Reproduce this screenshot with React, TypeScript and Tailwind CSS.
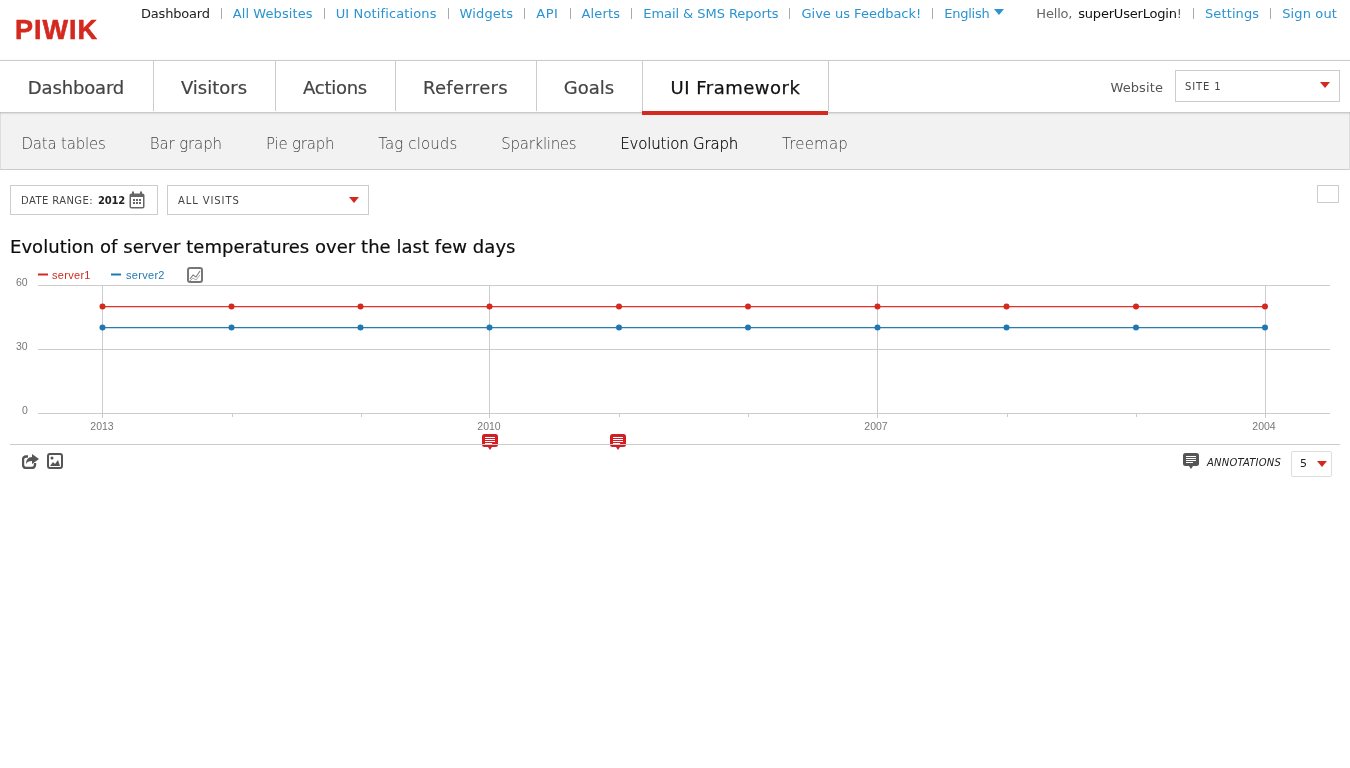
const topLinks = [
  { label: "All Websites", cls: "tracking-[0.09px]" },
  { label: "UI Notifications", cls: "tracking-[0.13px]" },
  { label: "Widgets", cls: "tracking-[0.14px]" },
  { label: "API", cls: "tracking-[0.6px]" },
  { label: "Alerts", cls: "tracking-[0.16px]" },
  { label: "Email & SMS Reports", cls: "tracking-[-0.05px]" },
  { label: "Give us Feedback!", cls: "" },
];
const tabs = [
  { label: "Dashboard", cls: "w-[154px] tracking-[-0.15px]" },
  { label: "Visitors", cls: "w-[122px]" },
  { label: "Actions", cls: "w-[120px] tracking-[-0.28px]" },
  { label: "Referrers", cls: "w-[141px] tracking-[0.33px]" },
  { label: "Goals", cls: "w-[106px]" },
];
const subTabs = [
  { label: "Data tables", cls: "tracking-[-0.2px]" },
  { label: "Bar graph", cls: "tracking-[-0.12px]" },
  { label: "Pie graph", cls: "tracking-[-0.22px]" },
  { label: "Tag clouds", cls: "tracking-[0.1px]" },
  { label: "Sparklines", cls: "tracking-[-0.3px]" },
  { label: "Evolution Graph", cls: "tracking-[-0.2px] text-[#000] [-webkit-text-stroke:0.2px_#000]" },
  { label: "Treemap", cls: "tracking-[0.2px]" },
];
const pointsX = [102.5, 231.5, 360.5, 489.5, 619, 748, 877.5, 1006.5, 1136, 1265];

function Sep() {
  return <span className="block w-px h-[11px] bg-[#aaa] mx-[11px]" />;
}

function Caret({ color = "#d4291f", className = "" }: { color?: string; className?: string }) {
  return (
    <svg width="10" height="6" viewBox="0 0 10 6" className={className}>
      <path d="M0 0h10L5 6z" fill={color} />
    </svg>
  );
}

function NoteIcon({ color }: { color: string }) {
  return (
    <svg width="16" height="16" viewBox="0 0 16 16" className="block">
      <path d="M2.5 0h11A2.5 2.5 0 0 1 16 2.5v8a2.5 2.5 0 0 1-2.5 2.5H10l-2 3-2-3H2.5A2.5 2.5 0 0 1 0 10.5v-8A2.5 2.5 0 0 1 2.5 0z" fill={color} />
      <path d="M3 3.5h10M3 5.5h10M3 7.5h10M3 9.5h7" stroke="#fff" strokeWidth="1" />
    </svg>
  );
}

function Chart() {
  return (
    <svg width="1350" height="176" viewBox="0 264 1350 176" className="block">
      {/* legend */}
      <line x1="38" x2="48" y1="274.5" y2="274.5" stroke="#d4291f" strokeWidth="2" />
      <text x="52" y="279" fontSize="11" letterSpacing="0.3" fill="#d4291f" fontFamily="Liberation Sans">server1</text>
      <line x1="111" x2="121" y1="274.5" y2="274.5" stroke="#1f78b4" strokeWidth="2" />
      <text x="126" y="279" fontSize="11" letterSpacing="0.3" fill="#1f78b4" fontFamily="Liberation Sans">server2</text>
      <rect x="188" y="268" width="14" height="14" rx="2" fill="none" stroke="#777" strokeWidth="2" />
      <path d="M190 279l3-4 3 2 4-6" fill="none" stroke="#808080" strokeWidth="1.2" />
      <path d="M190 281l3-3 3 2 4-5" fill="none" stroke="#aaa" strokeWidth="1" />

      {/* grid */}
      {[285.5, 349.5, 413.5].map((y) => (
        <line key={y} x1="38" x2="1330" y1={y} y2={y} stroke="#ccc" />
      ))}
      {[102.5, 489.5, 877.5, 1265.5].map((x) => (
        <line key={x} x1={x} x2={x} y1="285" y2="418" stroke="#ccc" />
      ))}
      {[232.5, 361.5, 619.5, 748.5, 1007.5, 1136.5].map((x) => (
        <line key={x} x1={x} x2={x} y1="413" y2="417" stroke="#ccc" />
      ))}

      {/* axis labels */}
      <g fontSize="10.5" fill="#777" fontFamily="Liberation Sans">
        <text x="16" y="286">60</text>
        <text x="16" y="350">30</text>
        <text x="22" y="414">0</text>
        <text x="102" y="430" textAnchor="middle">2013</text>
        <text x="489" y="430" textAnchor="middle">2010</text>
        <text x="876" y="430" textAnchor="middle">2007</text>
        <text x="1264" y="430" textAnchor="middle">2004</text>
      </g>

      {/* series, each line has a faint shadow under it */}
      <line x1="102" x2="1265" y1="307.5" y2="307.5" stroke="#d4291f" strokeOpacity="0.25" />
      <line x1="102" x2="1265" y1="306.5" y2="306.5" stroke="#e0342a" />
      <line x1="102" x2="1265" y1="328.5" y2="328.5" stroke="#1f78b4" strokeOpacity="0.25" />
      <line x1="102" x2="1265" y1="327.5" y2="327.5" stroke="#2a7cb0" />
      {pointsX.map((x) => (
        <g key={x}>
          <circle cx={x} cy="306.5" r="3" fill="#d4291f" />
          <circle cx={x} cy="327.5" r="3" fill="#1f78b4" />
        </g>
      ))}
    </svg>
  );
}

export default function App() {
  return (
    <div className="min-h-screen font-['DejaVu_Sans',sans-serif] text-[#444] [will-change:transform]">
      {/* Top bar */}
      <div className="h-[60px] flex items-start relative">
        <div className="absolute left-[15px] top-[13px] text-[#d4291f] text-[27px] leading-[34px] font-bold tracking-[1px] font-['Liberation_Sans',sans-serif] [-webkit-text-stroke:0.6px_#d4291f]">
          PIWIK
        </div>
        <div className="ml-[141px] mt-[5px] flex items-center text-[13px] leading-[17px] whitespace-nowrap">
          <span className="text-[#222] tracking-[-0.2px]">Dashboard</span>
          {topLinks.map((l) => (
            <span key={l.label} className="flex items-center">
              <Sep />
              <span className={`text-[#2a93d0] ${l.cls}`}>{l.label}</span>
            </span>
          ))}
          <Sep />
          <span className="text-[#2a93d0] tracking-[-0.25px]">English</span>
          <Caret color="#2a93d0" className="ml-[5px] mb-[4px]" />
        </div>
        <div className="ml-auto mr-[13px] mt-[5px] flex items-center text-[13px] leading-[17px] whitespace-nowrap">
          <span className="text-[#666] tracking-[-0.2px]">Hello, </span>
          <span className="text-[#111] ml-[6px] tracking-[-0.2px]">superUserLogin</span>
          <span className="text-[#666]">!</span>
          <Sep />
          <span className="text-[#2a93d0] tracking-[0.12px]">Settings</span>
          <Sep />
          <span className="text-[#2a93d0] tracking-[0.12px]">Sign out</span>
        </div>
      </div>

      {/* Main nav */}
      <div className="h-[52px] border-t border-[#ccc] flex items-start relative z-10 shadow-[0_1px_2px_rgba(0,0,0,0.25)] bg-white">
        {tabs.map((t) => (
          <div key={t.label} className={`h-[50px] border-r border-[#ccc] flex items-center justify-center text-[18px] text-[#444] pt-[2px] pr-[1px] whitespace-nowrap [-webkit-text-stroke:0.2px_#444] ${t.cls}`}>
            {t.label}
          </div>
        ))}
        <div className="relative w-[186px] tracking-[0.5px] h-[50px] border-r border-[#ccc] flex items-center justify-center text-[18px] text-[#111] whitespace-nowrap pt-[2px] [-webkit-text-stroke:0.25px_#111]">
          UI Framework
          <div className="absolute left-[-1px] top-[50px] w-[186px] h-[4px] bg-[#d4291f]" />
        </div>
        <div className="ml-auto mr-[10px] flex items-start pt-[9px]">
          <span className="text-[13px] text-[#555] mt-[8px] mr-[12px] tracking-[0.1px]">Website</span>
          <div className="w-[165px] h-[32px] border border-[#ccc] bg-white flex items-center justify-between pl-[9px] pr-[9px] text-[10px] tracking-[0.85px] text-[#444]">
            <span className="mt-[1px]">SITE 1</span>
            <Caret className="mb-[2px]" />
          </div>
        </div>
      </div>

      {/* Sub nav */}
      <div className="h-[58px] pt-[8px] bg-[#f2f2f2] border-l border-r border-b border-[#ddd] border-b-[#ccc] flex items-center pl-[20.5px] gap-[44px] font-light text-[15px] text-[#444] whitespace-nowrap">
        {subTabs.map((t) => (
          <span key={t.label} className={t.cls}>{t.label}</span>
        ))}
      </div>

      {/* Controls */}
      <div className="flex items-start mt-[15px] px-[10px] relative">
        <div className="h-[30px] w-[148px] border border-[#ccc] flex items-center pl-[10px] text-[10px] tracking-[0.4px] text-[#444] whitespace-nowrap">
          <span>DATE RANGE:</span>
          <b className="ml-[5px] text-[#222] tracking-[-0.2px]">2012</b>
          <svg width="17" height="18" viewBox="0 0 17 18" className="ml-[4px]">
            <rect x="0.5" y="2.5" width="15" height="15" rx="2" fill="#666" />
            <rect x="2" y="6" width="12" height="10" fill="#fff" />
            <path d="M4 0.5v4M12 0.5v4" stroke="#666" strokeWidth="2" />
            <path d="M4 8h2v2H4zM7 8h2v2H7zM10 8h2v2h-2zM4 11h2v2H4zM7 11h2v2H7zM10 11h2v2h-2z" fill="#666" />
          </svg>
        </div>
        <div className="ml-[9px] h-[30px] w-[202px] border border-[#ccc] flex items-center justify-between pl-[10px] pr-[9px] text-[10px] tracking-[0.9px] text-[#444]">
          <span className="mt-[1px]">ALL VISITS</span>
          <Caret />
        </div>
        <div className="ml-auto mr-[1px] w-[22px] h-[18px] border border-[#ccc]" />
      </div>

      {/* Title */}
      <h2 className="ml-[10px] mt-[21px] text-[18px] leading-[22px] tracking-[0.04px] text-[#0d0d0d] font-normal whitespace-nowrap [-webkit-text-stroke:0.2px_#0d0d0d]">
        Evolution of server temperatures over the last few days
      </h2>

      {/* Chart */}
      <div className="relative mt-[6px]">
        <Chart />
        <div className="absolute left-[482px] top-[170px]"><NoteIcon color="#d01f25" /></div>
        <div className="absolute left-[610px] top-[170px]"><NoteIcon color="#d01f25" /></div>
      </div>

      {/* Footer of the graph */}
      <div className="mx-[10px] border-t border-[#ccc] h-[40px] flex items-start relative mt-[4px]">
        <div className="flex items-center ml-[12px] mt-[8px] gap-[8px]">
          <svg width="17" height="16" viewBox="0 0 17 16">
            <path d="M6 3.5H4a3 3 0 0 0-3 3V12a3 3 0 0 0 3 3h6a3 3 0 0 0 3-3v-2" fill="none" stroke="#555" strokeWidth="2.4" />
            <path d="M10 1l7 5-7 5V8C7 8 5 9 4 11c0-4 2-7 6-7z" fill="#555" />
          </svg>
          <svg width="16" height="16" viewBox="0 0 16 16">
            <rect x="1" y="1" width="14" height="14" rx="2" fill="none" stroke="#555" strokeWidth="2" />
            <circle cx="5" cy="5" r="1.5" fill="#555" />
            <path d="M3 13l3-4 2 2 3-4 2 6z" fill="#555" />
          </svg>
        </div>
        <div className="ml-auto flex items-start mt-[8px] mr-[8px]">
          <NoteIcon color="#555" />
          <span className="ml-[8px] mt-[2px] text-[10px] italic tracking-[0.2px] text-[#222]">ANNOTATIONS</span>
          <div className="ml-[10px] mt-[-2px] w-[41px] h-[26px] border border-[#ddd] rounded-[2px] flex items-center justify-between pl-[8px] pr-[4px] text-[11px] text-[#222]">
            <span>5</span>
            <Caret className="mb-[1px]" />
          </div>
        </div>
      </div>
    </div>
  );
}
